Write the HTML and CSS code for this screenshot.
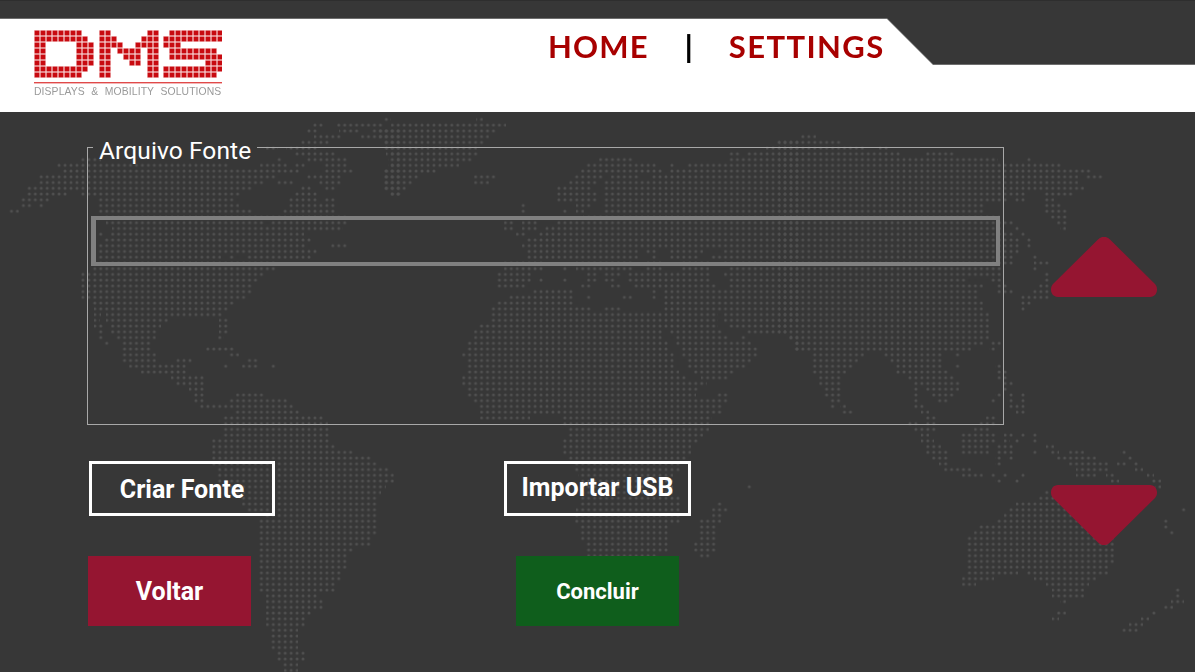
FILE: index.html
```html
<!DOCTYPE html>
<html lang="pt">
<head>
<meta charset="utf-8">
<title>DMS</title>
<link rel="stylesheet" href="styles.css">
</head>
<body>
<div class="screen">
  <svg class="map" width="1195" height="672" viewBox="0 0 1195 672" aria-hidden="true">
    <defs>
      <pattern id="dots" patternUnits="userSpaceOnUse" x="2.575" y="0" width="5.95" height="1">
        <ellipse cx="2.975" cy="0.5" rx="1.5" ry="0.262" fill="#505050"/>
      </pattern>
    </defs>
    <g transform="translate(0 1.71) scale(1 5.74)" fill="url(#dots)">
      <!-- North America, Greenland -->
      <path d="M384 20H391v1H384zM312 21H323v1H312zM337 21H383v1H337zM307 22H318v1H307zM339 22H359v1H339zM372 22H401v1H372zM314 23H341v1H314zM361 23H401v1H361zM301 24H329v1H301zM384 24H401v1H384zM266 25H278v1H266zM286 25H318v1H286zM386 25H401v1H386zM294 26H336v1H294zM386 26H401v1H386zM81 27H101v1H81zM276 27H283v1H276zM307 27H348v1H307zM388 27H401v1H388zM57 28H228v1H57zM260 28H287v1H260zM295 28H305v1H295zM324 28H347v1H324zM388 28H401v1H388zM62 29H299v1H62zM324 29H353v1H324zM384 29H401v1H384zM39 30H276v1H39zM307 30H341v1H307zM384 30H401v1H384zM39 31H264v1H39zM277 31H294v1H277zM319 31H341v1H319zM384 31H401v1H384zM27 32H253v1H27zM301 32H313v1H301zM324 32H336v1H324zM384 32H401v1H384zM27 33H68v1H27zM81 33H241v1H81zM294 33H318v1H294zM390 33H401v1H390zM21 34H51v1H21zM97 34H234v1H97zM289 34H318v1H289zM324 34H336v1H324zM21 35H33v1H21zM39 35H45v1H39zM97 35H239v1H97zM289 35H336v1H289zM9 36H19v1H9zM97 36H253v1H97zM282 36H336v1H282zM104 37H348v1H104zM106 38H264v1H106zM271 38H348v1H271zM112 39H343v1H112zM97 40H103v1H97zM111 40H304v1H111zM104 41H311v1H104zM97 42H306v1H97zM331 42H348v1H331zM97 43H318v1H97zM97 44H221v1H97zM228 44H234v1H228zM247 44H311v1H247zM91 45H278v1H91zM92 46H276v1H92zM81 47H264v1H81zM81 48H258v1H81zM81 49H253v1H81zM81 50H253v1H81zM81 51H246v1H81zM92 52H234v1H92zM94 53H229v1H94zM94 54H101v1H94zM106 54H223v1H106zM94 55H100v1H94zM106 55H168v1H106zM219 55H228v1H219zM94 56H103v1H94zM111 56H161v1H111zM219 56H228v1H219zM98 57H104v1H98zM111 57H158v1H111zM219 57H228v1H219zM98 58H104v1H98zM116 58H156v1H116zM218 58H224v1H218zM104 59H110v1H104zM122 59H151v1H122zM122 60H151v1H122zM206 60H234v1H206zM122 61H156v1H122zM229 61H239v1H229zM122 62H156v1H122zM176 62H193v1H176zM247 62H258v1H247zM129 63H186v1H129zM222 63H228v1H222zM242 63H258v1H242zM270 63H276v1H270zM141 64H186v1H141zM171 65H204v1H171zM176 66H204v1H176zM189 67H204v1H189zM194 68H204v1H194zM236 68H264v1H236zM194 69H204v1H194zM229 69H288v1H229zM199 70H294v1H199z"/>
      <!-- South America -->
      <path d="M235 71H300v1H235zM223 72H323v1H223zM223 73H328v1H223zM223 74H330v1H223zM223 75H330v1H223zM212 76H330v1H212zM212 77H336v1H212zM212 78H353v1H212zM212 79H371v1H212zM212 80H377v1H212zM217 81H389v1H217zM217 82H394v1H217zM217 83H394v1H217zM217 84H386v1H217zM217 85H381v1H217zM239 86H377v1H239zM242 87H377v1H242zM247 88H377v1H247zM264 89H377v1H264zM259 90H377v1H259zM259 91H377v1H259zM259 92H377v1H259zM259 93H371v1H259zM259 94H371v1H259zM259 95H353v1H259zM259 96H348v1H259zM259 97H348v1H259zM259 98H348v1H259zM259 99H341v1H259zM259 100H341v1H259zM259 101H336v1H259zM259 102H336v1H259zM266 103H318v1H266zM266 104H323v1H266zM266 105H323v1H266zM266 106H312v1H266zM266 107H307v1H266zM266 108H307v1H266zM271 109H298v1H271zM271 110H298v1H271zM271 111H298v1H271zM271 112H298v1H271zM276 113H305v1H276zM276 114H305v1H276zM282 115H298v1H282zM284 116H298v1H284zM299 117H312v1H299zM300 118H312v1H300zM300 119H323v1H300z"/>
      <!-- Europe, Africa, Asia -->
      <path d="M476 20H483v1H476zM391 21H506v1H391zM379 22H496v1H379zM379 23H489v1H379zM384 24H484v1H384zM384 25H477v1H384zM391 26H478v1H391zM397 27H473v1H397zM391 28H459v1H391zM384 29H436v1H384zM384 30H419v1H384zM474 30H496v1H474zM384 31H413v1H384zM474 31H489v1H474zM384 32H406v1H384zM391 33H401v1H391z"/>
      <path d="M777 24H801v1H777zM766 25H801v1H766zM729 26H741v1H729zM747 26H801v1H747zM599 27H633v1H599zM729 27H801v1H729zM586 28H658v1H586zM669 28H675v1H669zM687 28H801v1H687zM581 29H663v1H581zM669 29H801v1H669zM574 30H603v1H574zM611 30H639v1H611zM652 30H801v1H652zM569 31H598v1H569zM604 31H801v1H604zM557 32H591v1H557zM604 32H801v1H604zM557 33H598v1H557zM604 33H801v1H604zM557 34H598v1H557zM604 34H801v1H604zM521 35H527v1H521zM576 35H591v1H576zM604 35H801v1H604zM521 36H527v1H521zM561 36H567v1H561zM576 36H584v1H576zM604 36H801v1H604zM583 37H801v1H583zM504 38H514v1H504zM522 38H538v1H522zM557 38H801v1H557zM504 39H514v1H504zM522 39H538v1H522zM544 39H801v1H544zM516 40H526v1H516zM539 40H801v1H539zM527 41H801v1H527zM522 42H801v1H522zM527 43H638v1H527zM646 43H658v1H646zM669 43H703v1H669zM724 43H801v1H724zM527 44H638v1H527zM651 44H657v1H651zM669 44H698v1H669zM711 44H801v1H711zM504 45H544v1H504zM576 45H634v1H576zM646 45H663v1H646zM682 45H709v1H682zM724 45H801v1H724zM504 46H544v1H504zM562 46H568v1H562zM576 46H634v1H576zM646 46H663v1H646zM682 46H709v1H682zM729 46H801v1H729zM497 47H531v1H497zM587 47H598v1H587zM604 47H621v1H604zM627 47H711v1H627zM724 47H801v1H724zM497 48H531v1H497zM537 48H543v1H537zM561 48H567v1H561zM587 48H598v1H587zM604 48H616v1H604zM627 48H711v1H627zM729 48H801v1H729zM497 49H526v1H497zM581 49H591v1H581zM611 49H621v1H611zM634 49H716v1H634zM729 49H801v1H729zM532 50H573v1H532zM650 50H656v1H650zM664 50H801v1H664zM509 51H573v1H509zM585 51H591v1H585zM622 51H633v1H622zM650 51H656v1H650zM664 51H801v1H664zM497 52H573v1H497zM664 52H801v1H664zM491 53H591v1H491zM604 53H621v1H604zM664 53H801v1H664zM491 54H718v1H491zM724 54H801v1H724zM491 55H718v1H491zM724 55H801v1H724zM479 56H718v1H479zM729 56H788v1H729zM474 57H663v1H474zM669 57H723v1H669zM747 57H788v1H747zM474 58H663v1H474zM676 58H728v1H676zM740 58H746v1H740zM789 58H799v1H789zM467 59H668v1H467zM676 59H751v1H676zM794 59H800v1H794zM467 60H668v1H467zM681 60H758v1H681zM794 60H800v1H794zM462 61H674v1H462zM681 61H758v1H681zM467 62H674v1H467zM687 62H751v1H687zM467 63H674v1H467zM687 63H746v1H687zM467 64H679v1H467zM694 64H734v1H694zM462 65H686v1H462zM701 65H728v1H701zM462 66H707v1H462zM467 67H698v1H467zM467 68H696v1H467zM717 68H728v1H717zM473 69H728v1H473zM478 70H723v1H478zM480 71H723v1H480zM480 72H530v1H480zM562 72H712v1H562zM562 73H712v1H562zM568 74H709v1H568zM568 75H703v1H568zM562 76H698v1H562zM562 77H691v1H562zM562 78H691v1H562zM568 79H686v1H568zM573 80H680v1H573zM573 81H680v1H573zM578 82H673v1H578zM580 83H673v1H580zM580 84H673v1H580zM746 84H752v1H746zM580 85H673v1H580zM580 86H680v1H580zM580 87H680v1H580zM716 87H722v1H716zM576 88H680v1H576zM712 88H728v1H712zM575 89H680v1H575zM712 89H723v1H712zM575 90H680v1H575zM699 90H721v1H699zM580 91H670v1H580zM699 91H716v1H699zM580 92H670v1H580zM699 92H716v1H699zM580 93H670v1H580zM699 93H716v1H699zM585 94H670v1H585zM694 94H716v1H694zM585 95H670v1H585zM694 95H716v1H694zM587 96H657v1H587zM699 96H711v1H699zM587 97H657v1H587zM592 98H640v1H592z"/>
      <path d="M801 23H816v1H801zM779 24H841v1H779zM779 25H864v1H779zM879 25H888v1H879zM779 26H901v1H779zM926 26H954v1H926zM779 27H998v1H779zM1025 27H1032v1H1025zM779 28H1061v1H779zM779 29H1091v1H779zM779 30H1078v1H779zM1086 30H1103v1H1086zM779 31H1078v1H779zM779 32H1084v1H779zM779 33H1026v1H779zM1044 33H1073v1H1044zM779 34H1008v1H779zM1014 34H1026v1H1014zM1044 34H1054v1H1044zM779 35H984v1H779zM1044 35H1061v1H1044zM779 36H984v1H779zM1044 36H1068v1H1044zM779 37H1000v1H779zM1051 37H1068v1H1051zM779 38H1013v1H779zM1057 38H1068v1H1057zM779 39H1001v1H779zM1014 39H1020v1H1014zM1060 39H1066v1H1060zM779 40H1014v1H779zM1019 40H1025v1H1019zM779 41H1019v1H779zM1025 41H1031v1H1025zM779 42H1019v1H779zM1025 42H1031v1H1025zM779 43H1019v1H779zM779 44H1013v1H779zM1032 44H1038v1H1032zM779 45H1013v1H779zM1034 45H1049v1H1034zM779 46H1001v1H779zM1032 46H1038v1H1032zM779 47H1001v1H779zM1044 47H1050v1H1044zM779 48H966v1H779zM991 48H1001v1H991zM1044 48H1050v1H1044zM779 49H983v1H779zM997 49H1008v1H997zM1039 49H1049v1H1039zM779 50H978v1H779zM997 50H1013v1H997zM1032 50H1049v1H1032zM779 51H978v1H779zM1021 51H1049v1H1021zM779 52H983v1H779zM1021 52H1031v1H1021zM779 53H983v1H779zM1019 53H1025v1H1019zM779 54H989v1H779zM779 55H989v1H779zM779 56H989v1H779zM779 57H989v1H779zM789 58H989v1H789zM794 59H983v1H794zM991 59H1001v1H991zM794 60H971v1H794zM989 60H995v1H989zM812 61H864v1H812zM884 61H943v1H884zM954 61H960v1H954zM812 62H858v1H812zM889 62H943v1H889zM812 63H853v1H812zM896 63H943v1H896zM954 63H960v1H954zM995 63H1001v1H995zM812 64H846v1H812zM896 64H948v1H896zM997 64H1008v1H997zM819 65H841v1H819zM907 65H954v1H907zM997 65H1008v1H997zM819 66H841v1H819zM914 66H961v1H914zM1004 66H1013v1H1004zM824 67H841v1H824zM913 67H919v1H913zM926 67H959v1H926zM1003 67H1009v1H1003zM824 68H841v1H824zM913 68H919v1H913zM932 68H954v1H932zM995 68H1001v1H995zM1007 68H1013v1H1007zM1020 68H1026v1H1020zM830 69H841v1H830zM913 69H919v1H913zM937 69H948v1H937zM990 69H996v1H990zM1007 69H1013v1H1007zM1020 69H1026v1H1020zM829 70H835v1H829zM840 70H846v1H840zM914 70H924v1H914zM1009 70H1026v1H1009zM842 71H853v1H842zM921 71H929v1H921zM1016 71H1026v1H1016zM926 72H936v1H926zM986 72H996v1H986zM907 73H918v1H907zM926 73H936v1H926zM979 73H996v1H979zM914 74H936v1H914zM974 74H989v1H974zM921 75H929v1H921zM961 75H996v1H961zM1004 75H1013v1H1004zM1020 75H1026v1H1020zM1032 75H1038v1H1032zM921 76H934v1H921zM961 76H996v1H961zM1004 76H1010v1H1004zM1014 76H1020v1H1014zM1032 76H1038v1H1032zM926 77H941v1H926zM961 77H989v1H961zM997 77H1013v1H997zM1046 77H1054v1H1046zM926 78H948v1H926zM961 78H989v1H961zM997 78H1013v1H997zM1032 78H1038v1H1032zM1051 78H1059v1H1051zM1069 78H1084v1H1069zM1120 78H1126v1H1120zM932 79H948v1H932zM995 79H1001v1H995zM1007 79H1013v1H1007zM1057 79H1096v1H1057zM1127 79H1133v1H1127zM939 80H948v1H939zM995 80H1001v1H995zM1069 80H1108v1H1069zM1117 80H1126v1H1117zM1133 80H1139v1H1133zM944 81H971v1H944zM1076 81H1108v1H1076zM1135 81H1143v1H1135zM962 82H983v1H962zM990 82H996v1H990zM1002 82H1008v1H1002zM1020 82H1026v1H1020zM1076 82H1096v1H1076zM1106 82H1114v1H1106zM1147 82H1154v1H1147zM995 83H1001v1H995zM1014 83H1020v1H1014zM1111 83H1119v1H1111zM1152 83H1161v1H1152zM1155 84H1161v1H1155zM1044 85H1050v1H1044zM1039 86H1054v1H1039zM1016 87H1061v1H1016zM1009 88H1066v1H1009zM1180 88H1186v1H1180zM1004 89H1073v1H1004zM997 90H1078v1H997zM1162 90H1168v1H1162zM979 91H1084v1H979zM1162 91H1168v1H1162zM974 92H1089v1H974zM1169 92H1175v1H1169zM967 93H1114v1H967zM967 94H1114v1H967zM967 95H1114v1H967zM967 96H1114v1H967zM967 97H1114v1H967zM967 98H1108v1H967zM967 99H1018v1H967zM1027 99H1108v1H1027zM962 100H994v1H962zM1034 100H1096v1H1034zM962 101H976v1H962zM1046 101H1089v1H1046zM1052 102H1084v1H1052zM1174 102H1180v1H1174zM1052 103H1084v1H1052zM1174 103H1180v1H1174zM1060 104H1066v1H1060zM1171 104H1184v1H1171zM1164 105H1173v1H1164zM1057 106H1066v1H1057zM1150 106H1156v1H1150zM1052 107H1059v1H1052zM1141 107H1149v1H1141zM1129 108H1143v1H1129zM1122 109H1138v1H1122z"/>
    </g>
  </svg>

  <div class="topbar"></div>

  <div class="header-wrap">
    <header class="header">
      <div class="logo">
        <svg class="logo-mark" width="188" height="54" viewBox="0 0 188 54" aria-label="DMS">
          <defs>
            <pattern id="cell" patternUnits="userSpaceOnUse" width="6" height="6">
              <rect width="6" height="6" fill="#f8d4d4"/>
              <rect x="0.6" y="0.6" width="4.8" height="4.8" fill="#c80a10"/>
            </pattern>
          </defs>
          <path fill="url(#cell)" d="M0 0h48v6H0zM0 6h54v6H0zM0 12h12v6H0zM42 12h18v6H42zM0 18h12v6H0zM42 18h18v6H42zM0 24h12v6H0zM42 24h18v6H42zM0 30h12v6H0zM42 30h18v6H42zM0 36h54v6H0zM0 42h48v6H0z"/>
          <g transform="translate(65 0)">
            <path fill="url(#cell)" d="M0 0h12v6H0zM48 0h12v6H48zM0 6h18v6H0zM42 6h18v6H42zM0 12h24v6H0zM36 12h24v6H36zM0 18h12v6H0zM18 18h24v6H18zM48 18h12v6H48zM0 24h12v6H0zM24 24h18v6H24zM48 24h12v6H48zM0 30h12v6H0zM30 30h12v6H30zM48 30h12v6H48zM0 36h12v6H0zM48 36h12v6H48zM0 42h12v6H0zM48 42h12v6H48z"/>
          </g>
          <g transform="translate(129 0)">
            <path fill="url(#cell)" d="M6 0h54v6H6zM0 6h60v6H0zM0 12h18v6H0zM6 18h48v6H6zM6 24h54v6H6zM42 30h18v6H42zM0 36h60v6H0zM0 42h54v6H0z"/>
          </g>
          <rect x="0" y="52" width="188" height="1.4" fill="#e04a4a"/>
        </svg>
        <div class="logo-text">DISPLAYS &amp; MOBILITY SOLUTIONS</div>
      </div>
      <nav class="nav">
        <span class="nav-link nav-home">HOME</span>
        <span class="nav-sep">|</span>
        <span class="nav-link nav-settings">SETTINGS</span>
      </nav>
    </header>
  </div>

  <main class="main">
    <div class="content">
      <fieldset class="panel">
        <legend class="panel-title">Arquivo Fonte</legend>
        <div class="file-box"></div>
      </fieldset>
      <div class="row row-outline">
        <button class="btn btn-outline btn-create">Criar Fonte</button>
        <button class="btn btn-outline btn-import">Importar USB</button>
      </div>
      <div class="row row-solid">
        <button class="btn btn-solid btn-back">Voltar</button>
        <button class="btn btn-solid btn-done">Concluir</button>
      </div>
    </div>
    <div class="arrows">
      <svg class="arrow" width="108" height="62" viewBox="0 0 108 62" aria-label="Subir"><path d="M48 2.500a8 8 0 0 1 12 0L105 47c4 4.500 2 13-5 13H8C1 60-1 51.500 3 47z"/></svg>
      <svg class="arrow" width="108" height="62" viewBox="0 0 108 62" aria-label="Descer"><path d="M48 59.500a8 8 0 0 0 12 0L105 15c4-4.500 2-13-5-13H8C1 2-1 10.500 3 15z"/></svg>
    </div>
  </main>
</div>
</body>
</html>
```

FILE: styles.css
```css
* { box-sizing: border-box; }

html, body {
  margin: 0;
  padding: 0;
}

body {
  background: #373737;
  font-family: Roboto, "Liberation Sans", sans-serif;
  color: #fff;
}

.screen {
  position: relative;
  width: 1195px;
  height: 672px;
  overflow: hidden;
  background: #373737;
}

.map {
  position: absolute;
  left: 0;
  top: 0;
}

.topbar {
  position: relative;
  height: 18px;
  background: #373737;
  border-top: 1px solid #2e2e2e;
}

.header-wrap {
  position: relative;
  filter: drop-shadow(0 -1px 0 #6e6e6e);
  margin-top: 1px;
}

.header {
  display: flex;
  height: 93px;
  padding: 11px 0 0 34px;
  background: #fff;
  clip-path: polygon(0 0, 887px 0, 933px 46px, 100% 46px, 100% 100%, 0 100%);
}

.logo {
  width: 188px;
}

.logo-mark {
  display: block;
}

.logo-text {
  margin-top: 2px;
  font-family: "Liberation Sans", Arial, sans-serif;
  font-size: 10.4px;
  line-height: 12px;
  letter-spacing: 0.1px;
  word-spacing: 3.5px;
  white-space: nowrap;
  color: #9a9a9a;
}

.nav {
  display: flex;
  align-items: center;
  height: 32px;
  margin-left: 326px;
  font-family: Lato, "Liberation Sans", sans-serif;
  font-size: 31px;
  font-weight: 700;
  line-height: 32px;
}

.nav-link {
  color: #a80000;
  white-space: nowrap;
}

.nav-home {
  letter-spacing: 1.2px;
}

.nav-settings {
  letter-spacing: 1.4px;
}

.nav-sep {
  margin: 0 36px;
  font-size: 30px;
  font-weight: 900;
  color: #000;
}

.main {
  position: relative;
  display: flex;
  padding: 17px 0 0 87px;
}

.content {
  width: 917px;
}

.panel {
  height: 296px;
  margin: 0;
  padding: 0 3px;
  border: 1px solid #a8a8a8;
  min-width: 0;
}

.panel-title {
  margin-left: 2px;
  padding: 8px 6px 0;
  font-size: 24.5px;
  line-height: 28px;
  letter-spacing: 0.1px;
  color: #fff;
}

.file-box {
  height: 50px;
  margin-top: 51px;
  border: 4px solid #808080;
  border-left-width: 5px;
}

.row {
  display: flex;
}

.row-outline {
  margin: 36px 0 0 2px;
}

.row-solid {
  margin: 40px 0 0 1px;
}

.btn {
  display: block;
  margin: 0;
  padding: 0;
  font-family: Roboto, "Liberation Sans", sans-serif;
  font-weight: 700;
  color: #fff;
  cursor: pointer;
}

.btn-outline {
  height: 55px;
  width: 186px;
  background: transparent;
  border: 3px solid #fff;
  font-size: 25px;
}

.btn-create {
  padding-top: 2px;
}

.btn-import {
  margin-left: 229px;
  width: 187px;
  padding-bottom: 3px;
}

.btn-solid {
  width: 163px;
  height: 70px;
  border: 0;
}

.btn-back {
  background: #951531;
  font-size: 25px;
}

.btn-done {
  margin-left: 265px;
  background: #0f5e1c;
  font-size: 22px;
}

.arrows {
  display: flex;
  flex-direction: column;
  gap: 184px;
  margin-left: 46px;
  padding-top: 108px;
}

.arrow {
  display: block;
  fill: #951531;
}
```
